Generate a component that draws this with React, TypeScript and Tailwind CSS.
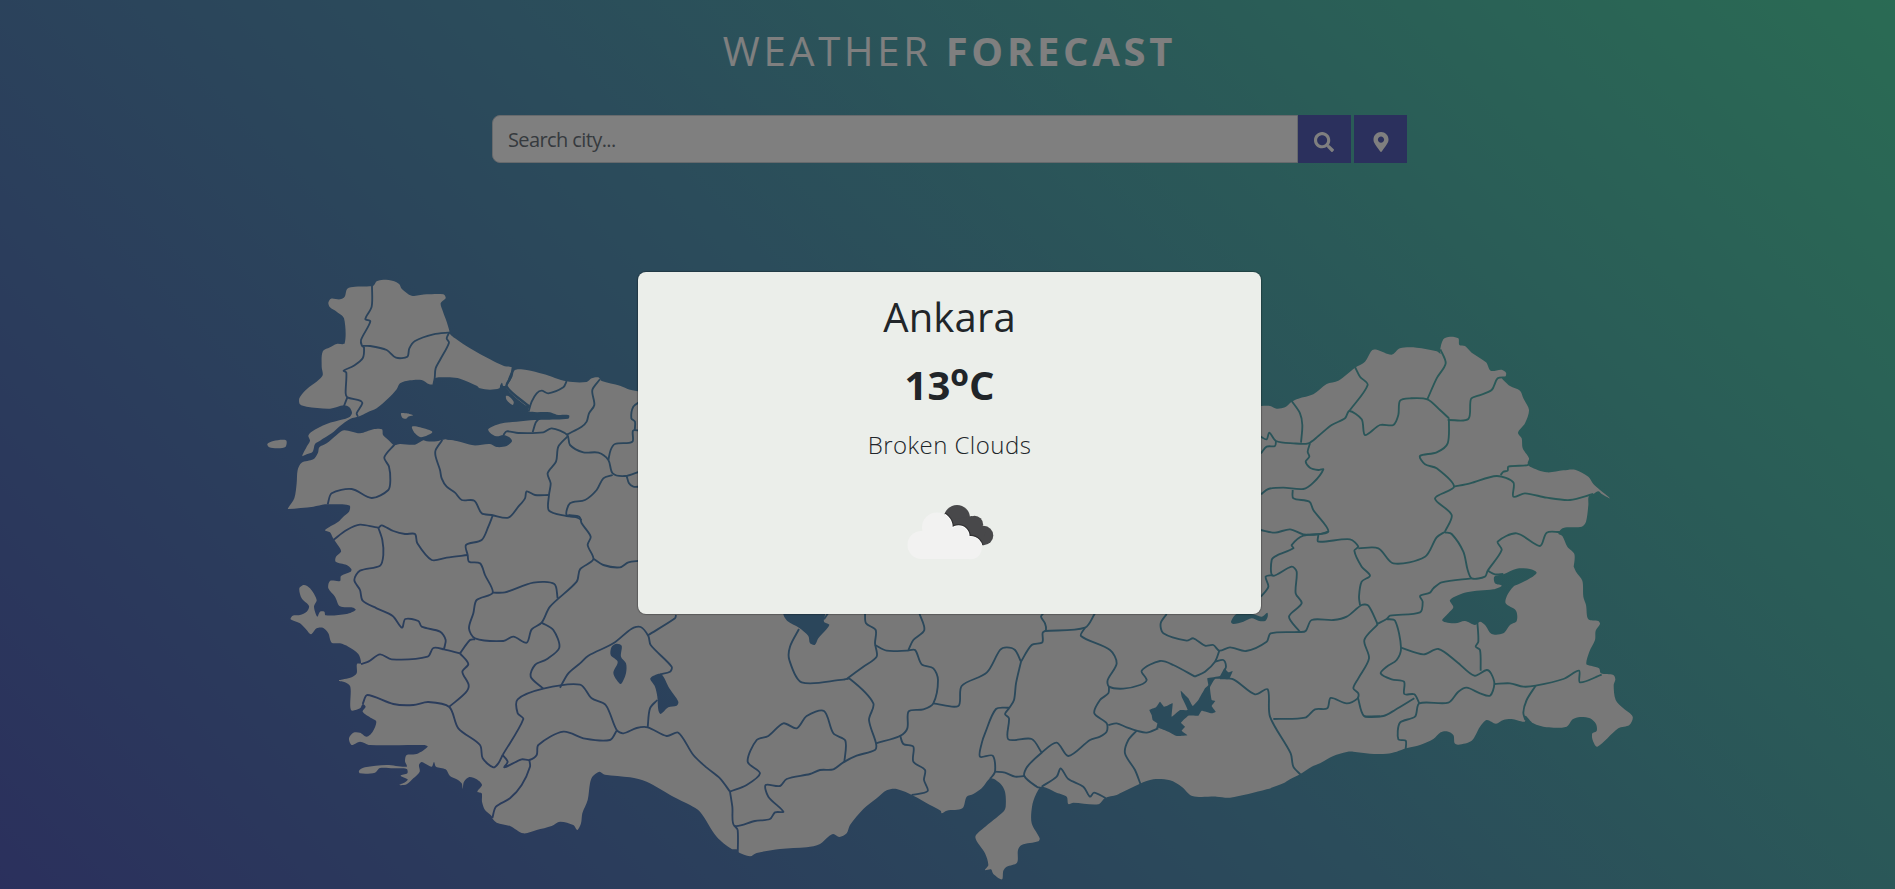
import React from "react";
import { FaSearch, FaMapMarkerAlt } from "react-icons/fa";

type Point = [number, number];

// Survey sheets: origin of every sheet on the map; coordinates in a sheet are thirds of a map unit.
const SHEETS: Record<string, Point> = {
  A: [260, 270],
  B: [440, 270],
  C: [280, 500],
  D: [460, 500],
  E: [700, 600],
  F: [940, 600],
  G: [1120, 600],
  H: [1250, 330],
  I: [1430, 330],
  J: [1370, 550],
};

// "A 1,2 3,4 B 5,6" -> points in map units
function parse(src: string): Point[] {
  let origin: Point = [0, 0];
  const out: Point[] = [];
  for (const token of src.trim().split(/\s+/)) {
    if (SHEETS[token]) {
      origin = SHEETS[token];
      continue;
    }
    const [x, y] = token.split(",").map(Number);
    out.push([origin[0] + x / 3, origin[1] + y / 3]);
  }
  return out;
}

function curve(src: string, closed: boolean, k = 0.15): string {
  const p = parse(src);
  const n = p.length;
  const at = (i: number): Point => (closed ? p[(i + n) % n] : p[Math.max(0, Math.min(n - 1, i))]);
  const len = (a: Point, b: Point) => Math.hypot(a[0] - b[0], a[1] - b[1]);
  let d = `M${p[0][0].toFixed(2)} ${p[0][1].toFixed(2)}`;
  const last = closed ? n : n - 1;
  for (let i = 0; i < last; i++) {
    const a = at(i - 1), b = at(i), c = at(i + 1), e = at(i + 2);
    const bc = len(b, c);
    const t1 = (2 * k * bc * 2) / (len(a, b) + bc || 1);
    const t2 = (2 * k * bc * 2) / (len(c, e) + bc || 1);
    const x1 = b[0] + ((c[0] - a[0]) * t1) / 2;
    const y1 = b[1] + ((c[1] - a[1]) * t1) / 2;
    const x2 = c[0] - ((e[0] - b[0]) * t2) / 2;
    const y2 = c[1] - ((e[1] - b[1]) * t2) / 2;
    d += `C${x1.toFixed(2)} ${y1.toFixed(2)} ${x2.toFixed(2)} ${y2.toFixed(2)} ${c[0].toFixed(2)} ${c[1].toFixed(2)}`;
  }
  return closed ? d + "Z" : d;
}

const THRACE =
  "A 205,98 213,86 240,88 254,80 262,56 285,50 336,49 342,46 350,34 370,29 400,33 418,43 425,56 455,77 500,73 550,73 557,84 542,100 549,125 560,155 568,182 " +
  "B 30,192 45,205 90,235 150,268 190,287 219,293 212,308 205,325 200,345 190,348 186,338 181,345 178,355 150,359 120,355 110,347 60,326 30,322 0,322 " +
  "A 525,325 520,342 508,343 485,330 450,331 420,340 410,358 385,385 350,415 320,428 300,438 270,447 240,468 215,490 180,512 165,522 158,545 140,553 127,558 140,530 150,512 145,497 155,485 200,462 250,448 270,440 276,428 268,412 252,406 210,416 140,410 120,403 118,385 135,362 187,318 185,290 188,245 210,232 230,222 254,220 252,145 230,125 210,112";

const ANATOLIA =
  "A 84,715 103,685 110,640 113,600 125,578 160,568 174,548 178,532 200,520 230,495 252,481 300,490 340,478 366,478 369,495 385,510 402,525 420,522 465,524 490,511 500,514 530,514 550,509 570,509 " +
  "B 10,508 50,513 100,526 150,522 170,531 200,528 216,514 210,503 190,495 170,499 150,488 145,477 180,461 230,455 285,450 310,449 385,446 387,436 350,434 330,427 265,424 268,408 255,405 200,355 212,330 225,300 260,300 310,312 380,334 440,336 455,325 475,322 485,333 540,347 570,359 600,364 " +
  "H 0,228 33,228 60,228 80,236 105,232 125,215 145,206 190,193 230,162 265,152 315,113 345,95 365,62 380,59 425,74 450,55 500,53 560,64 572,72 " +
  "I 30,62 40,28 60,20 85,25 88,45 105,48 125,68 168,97 182,122 215,119 228,128 226,140 215,143 225,155 240,168 270,182 280,205 297,240 285,280 264,308 275,325 278,355 297,385 293,400 300,410 350,427 400,421 435,419 475,440 490,462 510,480 540,505 515,492 505,484 490,492 476,500 475,525 468,575 455,590 400,594 385,610 397,618 412,650 433,672 431,710 " +
  "J 609,45 618,65 637,92 640,140 648,165 655,208 685,213 690,222 677,242 675,270 658,305 649,342 665,348 687,355 693,370 730,375 736,388 731,405 737,450 760,475 788,500 778,525 745,535 682,590 668,570 667,550 680,543 678,522 660,505 630,501 608,508 590,530 530,532 490,520 466,497 464,515 425,507 400,510 378,521 350,510 330,530 305,572 265,584 254,580 250,555 230,544 212,547 190,567 150,585 108,595 80,605 50,611 0,611 " +
  "G 700,455 680,456 640,468 600,490 575,500 540,523 510,538 490,550 440,568 330,593 290,590 217,588 185,560 150,541 100,538 60,551 0,580 " +
  "F 530,585 495,594 475,613 400,608 385,612 380,590 350,578 305,560 288,583 276,620 275,670 299,715 295,724 245,735 234,750 231,788 200,800 190,812 186,838 160,822 153,808 135,810 145,795 135,760 106,712 130,685 190,635 197,620 195,575 180,550 152,535 125,565 100,582 80,590 67,625 20,632 5,640 " +
  "E 722,632 690,615 640,587 590,567 560,571 530,595 490,627 450,675 440,700 418,711 400,702 385,710 360,732 320,742 240,747 170,759 150,769 115,757 110,748 95,747 50,710 0,635 " +
  "D 690,915 640,890 560,845 510,832 435,824 418,815 397,830 390,850 383,900 367,940 363,970 352,990 340,975 300,965 275,978 230,990 190,1000 150,978 110,968 97,955 95,948 75,930 66,905 65,880 52,875 66,855 50,838 28,831 12,845 8,866 " +
  "C 545,850 530,838 510,828 497,808 468,800 462,786 455,800 425,786 417,795 419,815 400,835 380,853 358,855 375,847 383,838 362,827 382,820 380,807 340,805 300,804 285,818 240,820 237,812 255,802 320,795 380,800 375,783 380,765 410,762 443,740 430,735 270,735 240,725 215,735 207,715 220,698 240,698 260,710 278,695 289,665 275,655 248,635 257,620 248,612 240,625 213,630 211,560 195,547 177,542 215,532 230,520 231,492 243,490 235,462 205,440 180,430 155,428 145,400 130,384 110,385 93,403 80,390 60,370 32,358 38,347 60,345 80,335 87,318 65,295 58,265 72,255 90,265 110,300 102,320 112,350 120,335 133,335 137,346 200,342 227,330 220,323 180,319 165,290 145,265 150,243 180,243 183,228 212,215 214,207 200,195 167,185 168,170 183,155 180,145 163,120 157,110 150,97 135,90 175,65 190,50 207,35 210,18 200,14 145,13 135,13 100,20 24,27";

const ISLANDS = [
  "A 22,522 40,513 78,511 77,530 55,535 28,532",
  "A 423,430 440,430 459,436 445,440 438,446 427,443",
  "A 456,470 480,472 517,486 483,502 465,490",
  "B 198,378 208,380 221,395 218,405 200,390",
];

const LAKES = [
  "D 455,440 470,431 485,437 483,470 498,490 498,520 483,552 470,540 460,518 473,485 452,465",
  "D 571,535 603,522 628,565 655,605 650,617 625,622 602,642 595,630 592,590 585,560",
  "E 250,40 262,63 297,83 325,108 330,130 345,134 355,115 388,75 372,65 375,40 360,20 270,20",
  "G 333,65 350,42 400,43 425,50 442,38 443,50 435,63 415,62 395,55 370,65 340,72",
  "J 217,212 235,190 250,172 240,150 290,127 370,118 395,107 375,100 373,80 400,73 440,56 480,57 500,68 480,85 445,103 430,110 412,135 407,160 438,182 440,213 420,225 400,250 365,252 345,225 330,215 315,225 285,213 255,220",
];

const RESERVOIR =
  "G 88,330 108,322 120,305 132,320 142,317 158,310 155,350 180,330 203,330 185,290 182,272 205,295 218,318 235,300 255,265 265,255 262,235 300,228 313,205 325,217 338,213 327,237 285,237 270,262 275,300 286,303 275,318 287,335 275,340 245,332 235,347 205,347 183,368 195,380 185,392 203,406 170,408 145,395 115,383 108,388 112,370 98,360 95,345";

const BORDERS = [
  "A 336,45 335,110 316,147 331,154 303,210 306,228 312,232 308,265 280,288 251,302 259,308 257,370 262,382 300,392 307,400 290,430 294,440",
  "A 262,382 252,408",
  "A 306,228 330,228 380,240 408,263 442,260 448,235 465,213 520,193 572,187",
  "A 568,187 560,205 567,218 540,270 527,295 524,325 520,344",
  "A 404,523 373,562 387,590 391,630 385,660 335,684 275,657 215,670 203,703",
  "B 266,424 275,395 290,370 305,362 325,370 370,352 380,333",
  "B 480,328 457,360 463,405 447,430 440,455 425,470 382,493",
  "B 190,495 200,484 235,489 310,487 335,475 382,495 390,525 430,547 475,548 505,570 518,610 555,618 600,604",
  "B 278,487 287,458 297,446",
  "B 505,570 512,540 525,522 577,515 579,482 600,482",
  "B 584,482 585,455 574,445 580,410 600,395",
  "B 382,500 355,530 348,575 323,610 332,640 327,675 327,722 380,738 410,742 425,750",
  "B 327,675 285,675 260,664 255,685 235,710 205,743 155,735 125,730 103,692 65,690 45,668 20,650 5,625 0,600 -13,560 -13,540 7,510",
  "B 518,615 490,625 470,660 435,690 390,700 380,735 415,740",
  "B 560,618 567,640 580,650 600,650",
  "C 160,120 200,90 240,74 295,83 305,76 340,93 375,102 405,102 412,130 455,180 500,173 563,165",
  "C 295,83 307,120 310,165 300,197 240,212 223,240 240,270 248,302 290,325 338,348 366,383 376,357 415,363 425,380 480,395 497,420 492,447",
  "D 23,165 18,135 65,120 85,80 98,47",
  "D 23,165 27,185 60,190 75,225 98,278 50,300 40,340 27,385 45,415 130,423 160,410 200,428 215,388 245,368 270,320 350,245 360,208 400,178 383,135 392,110 365,70 358,50 325,45",
  "D 98,278 135,277 220,248 283,252 293,295",
  "D 45,418 30,420 0,460",
  "C 540,460 565,492 547,515 566,555 557,578 508,620",
  "C 243,492 265,485 300,463 335,478 443,470 460,444 492,448 540,460",
  "C 248,612 262,585 340,612 400,615 445,606 508,621 535,685 600,735 D 68,775 100,802 115,790 128,765",
  "D 128,765 190,657 173,640 173,598 250,566 360,554 395,595 437,615 470,690 490,700 530,684 563,682 620,708 655,698 700,765 740,803 E 60,535 90,575",
  "D 128,765 143,785 133,802 185,778 208,780 230,765 235,735 310,695 375,716 450,720 470,692",
  "D 208,780 210,800 185,855 150,895 108,920 97,954",
  "D 245,368 280,390 298,443 260,478 225,495 212,530 250,566",
  "D 300,563 325,520 360,490 385,467 460,430 515,386 542,381 565,408 572,435 635,500 630,515 600,523",
  "D 565,405 645,355 648,345",
  "D 400,176 430,195 480,202 505,187 540,182",
  "D 563,682 570,625 592,600",
  "E 372,58 384,40",
  "E 297,87 270,140 268,180 305,247 430,239 450,237 520,310 507,360 528,430 525,450 470,467 430,487 400,508 360,510 330,522 260,537 240,558 197,555 205,590 250,635 225,637 210,657 165,663 103,677 97,620 90,575",
  "E 90,575 140,555 180,520 143,485 170,420 205,408 250,370 290,385 320,348 372,333 400,400 436,422 433,487",
  "E 103,677 113,690 113,770",
  "E 440,237 490,200 530,170 525,130 527,90 498,70 495,40",
  "E 525,135 560,152 620,152 645,150 665,193 700,205 714,240 700,310 670,328 626,334 622,385 600,408 528,430",
  "E 625,150 640,120 673,90 658,40",
  "E 700,310 775,318 F 65,258 140,218 180,150 200,142 225,150 243,185",
  "E 600,405 610,432 640,440 640,485 675,510 672,540 683,573 635,585",
  "F 243,185 275,135 307,127 308,98 318,90 315,70 303,50 310,40",
  "F 315,93 435,83 465,40",
  "F 435,83 423,108 510,150 530,190 503,240 507,260 550,266 600,255 620,240 605,212 660,183 700,195 765,230",
  "F 507,260 505,280 480,300 463,340 500,370 500,395 480,410 450,420 385,468 350,428 305,458 262,500 253,528 290,560 305,564",
  "F 505,375 530,370 560,382 590,392 620,398 655,385",
  "F 590,392 565,420 555,460 585,510 602,554",
  "F 243,185 228,250 222,300 207,325 195,342 207,355 205,418 275,417 305,458",
  "F 207,323 168,327 135,400 125,430 120,470 158,467 165,515 150,537",
  "F 165,515 195,518 225,530 253,528",
  "F 305,560 350,530 362,505 385,537 430,560 450,590 462,578 497,594",
  "G 140,42 122,70 130,100 200,122 220,115 255,137 280,135 298,152 330,142 378,153 440,125 452,100 540,96 557,93 575,60 640,60 680,50 725,15 745,17 773,73",
  "G 298,152 285,185 255,215 225,230",
  "G 285,185 310,180 318,200 312,215",
  "G 540,96 507,50 545,10 H 137,790 140,725 125,710 68,737 65,690 80,677 130,655 125,645 160,617 235,605 190,540 178,515 130,505 128,480",
  "G 773,73 733,120 747,175 715,235 700,265 715,280 713,295 680,310 632,294 622,325 585,328 555,353 460,357",
  "G 713,290 732,348 780,349",
  "G 300,235 340,238 405,283 443,268 450,350 512,460 520,500 542,524",
  "H 125,213 150,250 157,285 153,338",
  "H 20,310 33,320 50,328 58,308 78,333 130,340 175,340 205,318 245,285 285,265 298,243 335,268 345,315 390,285 430,285 445,255 450,212 480,205 532,208 570,240 597,265",
  "H 315,111 330,140 353,165 298,243",
  "H 571,58 587,100 560,145 532,208",
  "H 78,333 75,348 50,350 33,370",
  "H 180,340 173,365 178,380 167,395 180,413 205,420 220,418 190,458 160,477 100,473 55,477 33,493",
  "H 33,600 75,608 120,598 160,613 205,613 235,605",
  "H 205,615 205,635 300,628 325,650 313,662 335,710 360,737 335,755 327,800 330,825",
  "H 325,655 385,655 430,700 525,680 560,622 585,605",
  "H 33,800 55,770 47,740 68,735",
  "H 597,265 593,340 560,367 510,378 525,403 560,415 612,470 555,505 605,555 585,605",
  "I 53,270 115,267 123,207 145,197 185,180 203,145 230,142",
  "I 72,470 120,460 200,438 250,457 250,500 285,490 350,503 420,510 490,492",
  "I 212,435 220,425 233,422 235,410 290,406 299,402",
  "I 45,607 65,612 100,665 J 293,60 305,85 345,80 353,62 395,0 I 203,635 260,610 330,648 350,608 390,606",
  "J 353,62 375,73 400,72",
  "J 305,85 215,97 190,115 180,128 150,138 158,155 150,187 60,197 50,207 20,223",
  "J 50,207 75,212 93,293 80,330 50,350 32,370 65,388 102,395 103,432 133,433 148,460",
  "J 93,293 160,313 205,297 260,335 313,377 350,360 363,370 373,402 360,437 330,430 290,413 265,425 235,458 148,460 135,500 90,518 85,568 107,572 107,598",
  "J -18,499 40,498 75,480 133,445",
  "J 322,215 325,275 317,290 330,300 332,362",
  "J 373,402 420,400 460,410 497,407 580,387 627,362 630,397 695,374",
  "J 497,407 470,450 460,488 466,510",
];

const BOSPHORUS = "B 219,291 214,318 200,350 268,410";

function ProvinceMap() {
  return (
    <svg className="block w-full h-[629px]" viewBox="0 260 1895 629" preserveAspectRatio="xMidYMin slice">
      <mask id="provinces" maskUnits="userSpaceOnUse" x="0" y="260" width="1895" height="629">
        <g fill="#fff">
          <path d={curve(THRACE, true)} />
          <path d={curve(ANATOLIA, true)} />
          {ISLANDS.map((s) => (
            <path key={s} d={curve(s, true)} />
          ))}
        </g>
        <g fill="#000">
          {LAKES.map((s) => (
            <path key={s} d={curve(s, true)} />
          ))}
          <path d={curve(RESERVOIR, true, 0.05)} />
        </g>
        <g fill="none" stroke="#000" strokeWidth="1.85" strokeLinejoin="round">
          {BORDERS.map((s) => (
            <path key={s} d={curve(s, false)} />
          ))}
        </g>
        <path d={curve(BOSPHORUS, false)} fill="none" stroke="#000" strokeWidth="2.5" />
      </mask>
      <rect x="0" y="260" width="1895" height="629" fill="#f0f0f0" mask="url(#provinces)" />
    </svg>
  );
}

const DARK_PUFFS = (
  <>
    <circle cx="957" cy="518" r="13" />
    <circle cx="974.5" cy="524.3" r="8.6" />
    <circle cx="983.6" cy="535.5" r="9.7" />
    <path d="M950 520l22-4 14 14-4 15h-20z" />
  </>
);

const LIGHT_PUFFS = (
  <>
    <circle cx="937" cy="527.4" r="15" />
    <circle cx="921.5" cy="545" r="14" />
    <circle cx="958.6" cy="536.3" r="10.2" />
    <circle cx="970.6" cy="548" r="11.2" />
    <path d="M921 559h50v-12l-12-14-22-8-16 12z" />
  </>
);

function BrokenClouds() {
  return (
    <svg className="w-[100px] h-[100px]" viewBox="900 482 100 100">
      <clipPath id="dark-cloud">{DARK_PUFFS}</clipPath>
      <g fill="#48484a">{DARK_PUFFS}</g>
      <g clipPath="url(#dark-cloud)">
        <g stroke="#2c2c2e" strokeOpacity=".75" strokeWidth="4">{LIGHT_PUFFS}</g>
        <g fill="#fff" stroke="#fff" strokeWidth="1.6">{LIGHT_PUFFS}</g>
      </g>
      <g fill="#f2f2f1">{LIGHT_PUFFS}</g>
    </svg>
  );
}

export default function App() {
  return (
    <div className="relative h-[889px] w-full overflow-hidden bg-[linear-gradient(45deg,#5661ba_0%,#5699b6_50%,#54d6a8_100%)] font-['Open_Sans','Noto_Sans',sans-serif]">
      <div className="flex h-full flex-col">
        <header className="flex h-[260px] flex-col items-center pl-1 pt-[27px]">
          <h1 className="text-[40px] leading-[48px] tracking-[3.7px] text-white">
            WEATHER <b className="font-bold">FORECAST</b>
          </h1>
          <form className="mt-10 flex h-12 w-[915px]">
            <input
              className="h-12 flex-1 rounded-l-lg border border-[#ced4da] bg-white px-[15px] text-xl tracking-[-0.6px] text-[#212529] outline-none placeholder:text-[#6c757d]"
              placeholder="Search city..."
            />
            <button type="button" className="flex w-[53px] items-center justify-center bg-[#5661ba] pr-0.5 pt-1.5 text-xl text-white">
              <FaSearch />
            </button>
            <button type="button" className="ml-[3px] flex w-[53px] items-center justify-center bg-[#5661ba] pt-1.5 text-xl text-white">
              <FaMapMarkerAlt />
            </button>
          </form>
        </header>
        <ProvinceMap />
      </div>

      <div className="absolute inset-0 flex items-start justify-center bg-black/50 pl-1 pt-[272px]">
        <section className="flex h-[342px] w-[623px] flex-col items-center rounded-lg bg-[#ebeeea] pt-[21px] text-[#212529] shadow-[0_0_1px_1px_rgba(0,0,0,0.25)]">
          <h2 className="text-[40px] leading-[48px] tracking-[0.15px]">Ankara</h2>
          <p className="mt-5 h-12 text-[40px] font-bold leading-[48px]">
            13<span className="align-[-4px] text-[48px] leading-none">º</span>C
          </p>
          <p className="mt-[18px] text-2xl font-light leading-9 tracking-[0.45px]">Broken Clouds</p>
          <div className="mt-[19px]">
            <BrokenClouds />
          </div>
        </section>
      </div>
    </div>
  );
}
